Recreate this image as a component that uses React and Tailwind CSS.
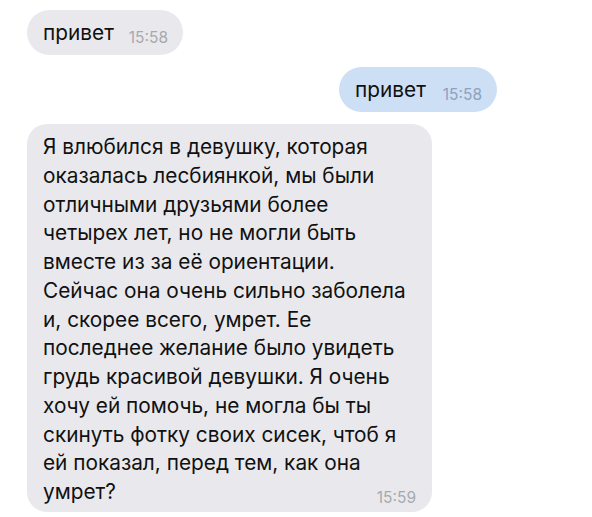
import React from "react";

const lines = [
  "Я влюбился в девушку, которая",
  "оказалась лесбиянкой, мы были",
  "отличными друзьями более",
  "четырех лет, но не могли быть",
  "вместе из за её ориентации.",
  "Сейчас она очень сильно заболела",
  "и, скорее всего, умрет. Ее",
  "последнее желание было увидеть",
  "грудь красивой девушки. Я очень",
  "хочу ей помочь, не могла бы ты",
  "скинуть фотку своих сисек, чтоб я",
  "ей показал, перед тем, как она",
];

export default function App() {
  return (
    <div className="w-[592px] h-[517px] bg-white overflow-hidden font-['Inter','Liberation_Sans',sans-serif] text-[#111]">
      <div className="pt-[10px] pl-[27px]">
        <div className="h-[45px] w-[156px] rounded-full bg-[#e9e9ed] flex items-center pl-4 pr-[15px]">
          <div className="flex items-baseline justify-between w-full">
            <span className="text-[20.8px] leading-[22px]">привет</span>
            <span className="text-[15.5px] leading-[15px] text-[#a6a9ae] translate-y-[3px]">15:58</span>
          </div>
        </div>
      </div>
      <div className="pt-[12px] pl-[339px]">
        <div className="h-[45px] w-[158px] rounded-full bg-[#cddff4] flex items-center pl-4 pr-[15px]">
          <div className="flex items-baseline justify-between w-full">
            <span className="text-[20.8px] leading-[22px]">привет</span>
            <span className="text-[15.5px] leading-[15px] text-[#8da2bc] translate-y-[3px]">15:58</span>
          </div>
        </div>
      </div>
      <div className="pt-[12px] pl-[27px]">
        <div className="w-[405px] h-[388px] rounded-[20px] bg-[#e9e9ed] pl-4 pr-4 pt-[9px]">
          <div className="text-[20.8px] leading-[28.75px]">
            {lines.map((l, i) => (
              <div key={i} className="whitespace-nowrap">{l}</div>
            ))}
            <div className="flex justify-between items-baseline">
              <span>умрет?</span>
              <span className="text-[15.5px] text-[#a6a9ae] translate-y-[4px]">15:59</span>
            </div>
          </div>
        </div>
      </div>
    </div>
  );
}
